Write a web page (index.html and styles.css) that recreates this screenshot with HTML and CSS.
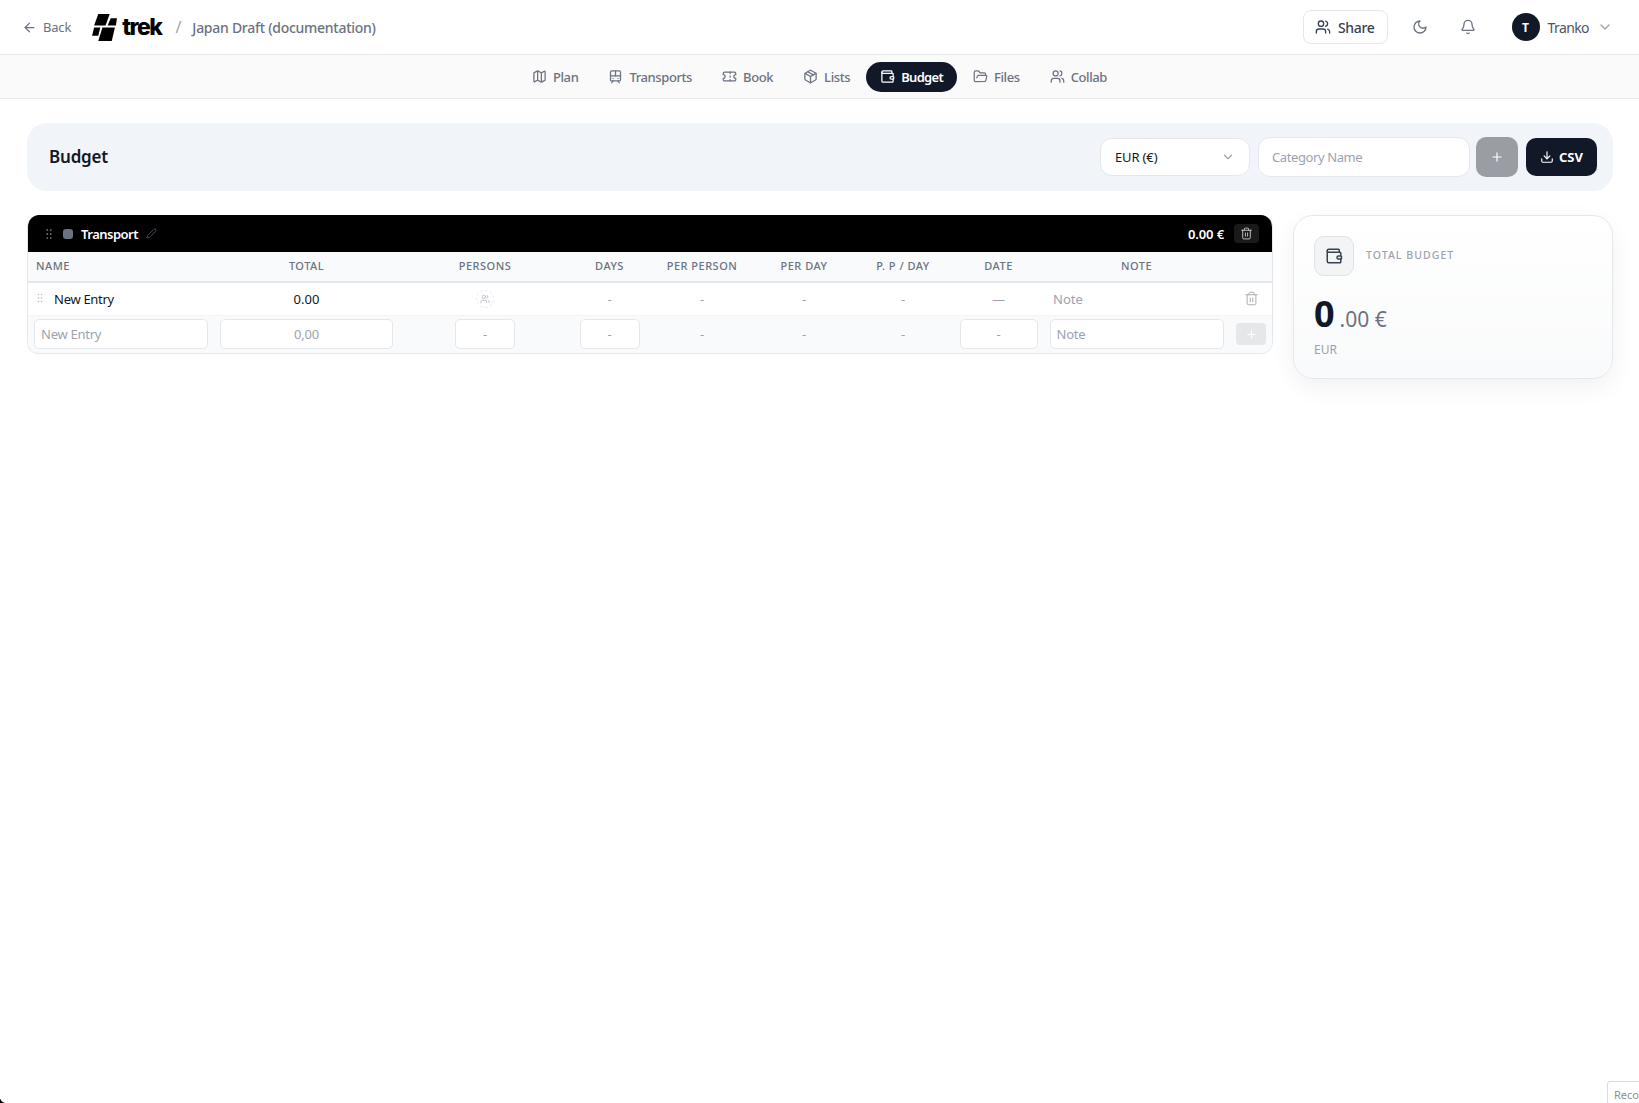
FILE: index.html
```html
<!doctype html>
<html lang="en">
  <head>
    <meta charset="UTF-8" />
    <title>Japan Draft (documentation) - Budget</title>
    <link rel="stylesheet" href="styles.css">
  </head>
  <body>
    <header class="topbar">
      <a class="back">
        <svg class="icon" viewBox="0 0 24 24"><path d="m12 19-7-7 7-7"/><path d="M19 12H5"/></svg>
        Back
      </a>
      <div class="logo">
        <svg class="logo-mark" viewBox="0 0 24 26">
          <polygon points="6,0 17,0 13,11 2,11"/>
          <polygon points="18,4 24,4 23,11 15,11"/>
          <polygon points="2,13 8,13 6,21 0,21"/>
          <polygon points="10,13 22,13 19,26 6,26"/>
        </svg>
        <span class="logo-text">trek</span>
      </div>
      <span class="slash">/</span>
      <span class="trip-title">Japan Draft (documentation)</span>
      <div class="topbar-right">
        <button class="share">
          <svg class="icon" viewBox="0 0 24 24"><path d="M16 21v-2a4 4 0 0 0-4-4H6a4 4 0 0 0-4 4v2"/><circle cx="9" cy="7" r="4"/><path d="M22 21v-2a4 4 0 0 0-3-3.87"/><path d="M16 3.13a4 4 0 0 1 0 7.75"/></svg>
          Share
        </button>
        <svg class="icon top-icon" viewBox="0 0 24 24"><path d="M12 3a6 6 0 0 0 9 9 9 9 0 1 1-9-9Z"/></svg>
        <svg class="icon top-icon" viewBox="0 0 24 24"><path d="M10.268 21a2 2 0 0 0 3.464 0"/><path d="M3.262 15.326A1 1 0 0 0 4 17h16a1 1 0 0 0 .74-1.673C19.41 13.956 18 12.499 18 8A6 6 0 0 0 6 8c0 4.499-1.411 5.956-2.738 7.326"/></svg>
        <div class="user">
          <span class="avatar">T</span>
          <span class="user-name">Tranko</span>
          <svg class="icon chevron" viewBox="0 0 24 24"><path d="m6 9 6 6 6-6"/></svg>
        </div>
      </div>
    </header>

    <nav class="tabs">
      <a class="tab"><svg class="icon" viewBox="0 0 24 24"><path d="M14.106 5.553a2 2 0 0 0 1.788 0l3.659-1.83A1 1 0 0 1 21 4.619v12.764a1 1 0 0 1-.553.894l-4.553 2.277a2 2 0 0 1-1.788 0l-4.212-2.106a2 2 0 0 0-1.788 0l-3.659 1.83A1 1 0 0 1 3 19.381V6.618a1 1 0 0 1 .553-.894l4.553-2.277a2 2 0 0 1 1.788 0z"/><path d="M15 5.764v15"/><path d="M9 3.236v15"/></svg>Plan</a>
      <a class="tab"><svg class="icon" viewBox="0 0 24 24"><rect x="4" y="3" width="16" height="16" rx="2"/><path d="M4 11h16"/><path d="M12 3v8"/><path d="m8 19-2 3"/><path d="m18 22-2-3"/><path d="M8 15h.01"/><path d="M16 15h.01"/></svg>Transports</a>
      <a class="tab"><svg class="icon" viewBox="0 0 24 24"><path d="M2 9a3 3 0 0 1 0 6v2a2 2 0 0 0 2 2h16a2 2 0 0 0 2-2v-2a3 3 0 0 1 0-6V7a2 2 0 0 0-2-2H4a2 2 0 0 0-2 2Z"/><path d="M13 5v2"/><path d="M13 17v2"/><path d="M13 11v2"/></svg>Book</a>
      <a class="tab"><svg class="icon" viewBox="0 0 24 24"><path d="M11 21.73a2 2 0 0 0 2 0l7-4A2 2 0 0 0 21 16V8a2 2 0 0 0-1-1.73l-7-4a2 2 0 0 0-2 0l-7 4A2 2 0 0 0 3 8v8a2 2 0 0 0 1 1.73z"/><path d="M12 22V12"/><path d="m3.3 7 8.7 5 8.7-5"/><path d="m7.5 4.27 9 5.15"/></svg>Lists</a>
      <a class="tab active"><svg class="icon" viewBox="0 0 24 24"><path d="M19 7V4a1 1 0 0 0-1-1H5a2 2 0 0 0 0 4h15a1 1 0 0 1 1 1v4h-3a2 2 0 0 0 0 4h3a1 1 0 0 0 1-1v-2a1 1 0 0 0-1-1"/><path d="M3 5v14a2 2 0 0 0 2 2h15a1 1 0 0 0 1-1v-4"/></svg>Budget</a>
      <a class="tab"><svg class="icon" viewBox="0 0 24 24"><path d="m6 14 1.5-2.9A2 2 0 0 1 9.24 10H20a2 2 0 0 1 1.94 2.5l-1.54 6a2 2 0 0 1-1.95 1.5H4a2 2 0 0 1-2-2V5a2 2 0 0 1 2-2h3.9a2 2 0 0 1 1.69.9l.81 1.2a2 2 0 0 0 1.67.9H18a2 2 0 0 1 2 2v2"/></svg>Files</a>
      <a class="tab"><svg class="icon" viewBox="0 0 24 24"><path d="M16 21v-2a4 4 0 0 0-4-4H6a4 4 0 0 0-4 4v2"/><circle cx="9" cy="7" r="4"/><path d="M22 21v-2a4 4 0 0 0-3-3.87"/><path d="M16 3.13a4 4 0 0 1 0 7.75"/></svg>Collab</a>
    </nav>

    <main class="page">
      <section class="budget-bar">
        <h1>Budget</h1>
        <div class="budget-actions">
          <div class="currency">
            <span>EUR (€)</span>
            <svg class="icon" viewBox="0 0 24 24"><path d="m6 9 6 6 6-6"/></svg>
          </div>
          <input class="category-input" type="text" placeholder="Category Name" />
          <button class="add-category">
            <svg class="icon" viewBox="0 0 24 24"><path d="M5 12h14"/><path d="M12 5v14"/></svg>
          </button>
          <button class="csv">
            <svg class="icon" viewBox="0 0 24 24"><path d="M12 15V3"/><path d="M21 15v4a2 2 0 0 1-2 2H5a2 2 0 0 1-2-2v-4"/><path d="m7 10 5 5 5-5"/></svg>
            CSV
          </button>
        </div>
      </section>

      <div class="columns">
        <section class="category">
          <div class="category-head">
            <svg class="grip" viewBox="0 0 24 24"><circle cx="9" cy="5" r="1.6"/><circle cx="15" cy="5" r="1.6"/><circle cx="9" cy="12" r="1.6"/><circle cx="15" cy="12" r="1.6"/><circle cx="9" cy="19" r="1.6"/><circle cx="15" cy="19" r="1.6"/></svg>
            <span class="color-dot"></span>
            <span class="category-name">Transport</span>
            <svg class="icon pencil" viewBox="0 0 24 24"><path d="M21.174 6.812a1 1 0 0 0-3.986-3.987L3.842 16.174a2 2 0 0 0-.5.83l-1.321 4.352a.5.5 0 0 0 .623.622l4.353-1.32a2 2 0 0 0 .83-.497z"/></svg>
            <span class="category-total">0.00 €</span>
            <span class="category-delete">
              <svg class="icon" viewBox="0 0 24 24"><path d="M3 6h18"/><path d="M19 6v14a2 2 0 0 1-2 2H7a2 2 0 0 1-2-2V6"/><path d="M8 6V4a2 2 0 0 1 2-2h4a2 2 0 0 1 2 2v2"/><path d="M10 11v6"/><path d="M14 11v6"/></svg>
            </span>
          </div>
          <table class="entries">
            <colgroup>
              <col class="c-name"><col class="c-total"><col class="c-persons"><col class="c-days">
              <col class="c-pp"><col class="c-pd"><col class="c-ppd"><col class="c-date">
              <col class="c-note"><col class="c-act">
            </colgroup>
            <thead>
              <tr>
                <th class="left">Name</th><th>Total</th><th>Persons</th><th>Days</th>
                <th>Per Person</th><th>Per Day</th><th>P. P / Day</th><th>Date</th><th>Note</th><th></th>
              </tr>
            </thead>
            <tbody>
              <tr class="entry">
                <td class="entry-name">
                  <svg class="grip" viewBox="0 0 24 24"><circle cx="9" cy="5" r="1.6"/><circle cx="15" cy="5" r="1.6"/><circle cx="9" cy="12" r="1.6"/><circle cx="15" cy="12" r="1.6"/><circle cx="9" cy="19" r="1.6"/><circle cx="15" cy="19" r="1.6"/></svg>
                  New Entry
                </td>
                <td class="amount">0.00</td>
                <td><span class="persons-chip"><svg class="icon" viewBox="0 0 24 24"><path d="M16 21v-2a4 4 0 0 0-4-4H6a4 4 0 0 0-4 4v2"/><circle cx="9" cy="7" r="4"/><path d="M22 21v-2a4 4 0 0 0-3-3.87"/><path d="M16 3.13a4 4 0 0 1 0 7.75"/></svg></span></td>
                <td class="muted">-</td>
                <td class="muted">-</td>
                <td class="muted">-</td>
                <td class="muted">-</td>
                <td class="muted">—</td>
                <td class="note-cell">Note</td>
                <td><svg class="icon row-delete" viewBox="0 0 24 24"><path d="M3 6h18"/><path d="M19 6v14a2 2 0 0 1-2 2H7a2 2 0 0 1-2-2V6"/><path d="M8 6V4a2 2 0 0 1 2-2h4a2 2 0 0 1 2 2v2"/><path d="M10 11v6"/><path d="M14 11v6"/></svg></td>
              </tr>
              <tr class="new-entry">
                <td><input class="cell-input left" type="text" placeholder="New Entry" /></td>
                <td><input class="cell-input" type="text" placeholder="0,00" /></td>
                <td><input class="cell-input small" type="text" placeholder="-" /></td>
                <td><input class="cell-input small" type="text" placeholder="-" /></td>
                <td class="muted">-</td>
                <td class="muted">-</td>
                <td class="muted">-</td>
                <td><input class="cell-input date" type="text" placeholder="-" /></td>
                <td><input class="cell-input left" type="text" placeholder="Note" /></td>
                <td><button class="add-entry"><svg class="icon" viewBox="0 0 24 24"><path d="M5 12h14"/><path d="M12 5v14"/></svg></button></td>
              </tr>
            </tbody>
          </table>
        </section>

        <aside class="total-card">
          <div class="total-head">
            <span class="wallet-box">
              <svg class="icon" viewBox="0 0 24 24"><path d="M19 7V4a1 1 0 0 0-1-1H5a2 2 0 0 0 0 4h15a1 1 0 0 1 1 1v4h-3a2 2 0 0 0 0 4h3a1 1 0 0 0 1-1v-2a1 1 0 0 0-1-1"/><path d="M3 5v14a2 2 0 0 0 2 2h15a1 1 0 0 0 1-1v-4"/></svg>
            </span>
            <span class="total-label">Total Budget</span>
          </div>
          <div class="total-value"><span class="whole">0</span><span class="cents">.00 €</span></div>
          <div class="total-currency">EUR</div>
        </aside>
      </div>
    </main>

    <div class="recaptcha">Reco</div>
    <div class="window-corner"></div>
  </body>
</html>
```

FILE: styles.css
```css
* {
  box-sizing: border-box;
}
body {
  margin: 0;
  height: 1103px;
  overflow: hidden;
  font-family: "Noto Sans", "Open Sans", sans-serif;
  font-size: 13px;
  color: #111827;
  background: #fff;
}
button {
  font-family: inherit;
  border: none;
  cursor: pointer;
}
input {
  font-family: inherit;
  outline: none;
}
input::placeholder {
  color: #9ca3af;
  opacity: 1;
}
.icon {
  width: 16px;
  height: 16px;
  flex: none;
  fill: none;
  stroke: currentColor;
  stroke-width: 2;
  stroke-linecap: round;
  stroke-linejoin: round;
}

/* top bar */
.topbar {
  height: 55px;
  display: flex;
  align-items: center;
  padding: 0 26px 0 22px;
  border-bottom: 1px solid #e5e7eb;
  box-shadow: 0 1px 3px rgba(0, 0, 0, 0.03);
  color: #6b7280;
}
.back {
  display: flex;
  align-items: center;
  gap: 6px;
  font-size: 13px;
  letter-spacing: -0.2px;
  color: #6b7280;
}
.back .icon {
  width: 15px;
  height: 15px;
}
.logo {
  display: flex;
  align-items: center;
  gap: 5px;
  margin-left: 21px;
}
.logo-mark {
  width: 25px;
  height: 27px;
  fill: #000;
}
.logo-text {
  font-family: Inter, sans-serif;
  font-size: 23px;
  font-weight: 800;
  letter-spacing: -1.5px;
  color: #000;
  line-height: 1;
}
.slash {
  margin-left: 14px;
  font-size: 16px;
  color: #9ca3af;
}
.trip-title {
  margin-left: 11px;
  font-size: 14px;
  font-weight: 500;
  letter-spacing: -0.27px;
  color: #6b7280;
}
.topbar-right {
  margin-left: auto;
  display: flex;
  align-items: center;
}
.share {
  display: flex;
  align-items: center;
  gap: 7px;
  height: 34px;
  padding: 0 12px 0 11px;
  font-size: 14px;
  font-weight: 500;
  letter-spacing: -0.3px;
  color: #374151;
  background: #fff;
  border: 1px solid #e5e7eb;
  border-radius: 8px;
}
.top-icon {
  color: #6b7280;
  margin-left: 24px;
}
.top-icon + .top-icon {
  margin-left: 32px;
}
.user {
  display: flex;
  align-items: center;
  margin-left: 36px;
}
.avatar {
  width: 28px;
  height: 28px;
  border-radius: 50%;
  background: #111827;
  color: #fff;
  font-size: 12px;
  font-weight: 700;
  display: flex;
  align-items: center;
  justify-content: center;
}
.user-name {
  margin-left: 8px;
  font-size: 14px;
  letter-spacing: -0.6px;
  color: #4b5563;
}
.chevron {
  margin-left: 8px;
  color: #9ca3af;
}

/* tabs */
.tabs {
  height: 44px;
  display: flex;
  align-items: center;
  justify-content: center;
  gap: 2px;
  background: #fafafa;
  border-bottom: 1px solid #e9eaec;
}
.tab {
  display: flex;
  align-items: center;
  gap: 6px;
  height: 30px;
  padding: 0 14px;
  font-size: 13px;
  font-weight: 500;
  letter-spacing: -0.4px;
  color: #6b7280;
  border-radius: 15px;
}
.tab .icon {
  width: 15px;
  height: 15px;
}
.tab.active {
  background: #111827;
  color: #fff;
  font-weight: 600;
  letter-spacing: -0.7px;
}

/* budget header */
.page {
  padding: 24px 26px 0 27px;
}
.budget-bar {
  height: 68px;
  display: flex;
  align-items: center;
  justify-content: space-between;
  padding: 0 16px 0 22px;
  background: #f1f5f9;
  border-radius: 20px;
}
.budget-bar h1 {
  margin: 0 0 2px;
  font-size: 17px;
  font-weight: 600;
  letter-spacing: -0.2px;
  color: #111827;
}
.budget-actions {
  display: flex;
  align-items: center;
}
.currency {
  width: 150px;
  height: 38px;
  display: flex;
  align-items: center;
  justify-content: space-between;
  padding: 0 14px 0 14px;
  background: #fff;
  border: 1px solid #e5e7eb;
  border-radius: 12px;
  font-size: 13px;
  letter-spacing: -0.15px;
}
.currency .icon {
  width: 14px;
  height: 14px;
  color: #9ca3af;
}
.category-input {
  width: 212px;
  height: 40px;
  margin-left: 8px;
  padding: 0 13px;
  font-size: 13px;
  letter-spacing: -0.4px;
  background: #fff;
  border: 1px solid #e5e7eb;
  border-radius: 12px;
}
.add-category {
  width: 42px;
  height: 40px;
  margin-left: 6px;
  display: flex;
  align-items: center;
  justify-content: center;
  background: #9a9da3;
  color: #fff;
  border-radius: 10px;
}
.add-category .icon {
  width: 14px;
  height: 14px;
}
.csv {
  width: 71px;
  height: 38px;
  margin-left: 8px;
  display: flex;
  align-items: center;
  justify-content: center;
  gap: 5px;
  background: #111827;
  color: #fff;
  font-size: 13px;
  font-weight: 700;
  border-radius: 10px;
}
.csv .icon {
  width: 14px;
  height: 14px;
}

/* category table */
.columns {
  display: flex;
  align-items: flex-start;
  gap: 20px;
  margin-top: 24px;
}
.category {
  width: 1246px;
  border: 1px solid #e5e7eb;
  border-top: none;
  border-radius: 12px;
  overflow: hidden;
}
.category-head {
  height: 37px;
  margin: 0 -1px;
  display: flex;
  align-items: center;
  padding: 0 14px 0 15px;
  background: #000;
  color: #fff;
}
.grip {
  width: 14px;
  height: 14px;
  fill: #6b7280;
  flex: none;
}
.color-dot {
  width: 10px;
  height: 10px;
  margin-left: 7px;
  border-radius: 3px;
  background: #6b7280;
}
.category-name {
  margin-left: 8px;
  font-size: 13px;
  font-weight: 600;
  letter-spacing: -0.5px;
}
.pencil {
  width: 11px;
  height: 11px;
  margin-left: 8px;
  color: #6b7280;
  stroke-width: 1.5;
}
.category-total {
  margin-left: auto;
  font-size: 13px;
  font-weight: 600;
  letter-spacing: -0.1px;
}
.category-delete {
  width: 25px;
  height: 19px;
  margin-left: 10px;
  display: flex;
  align-items: center;
  justify-content: center;
  border-radius: 4px;
  background: #1a1a1a;
  color: #d1d5db;
}
.category-delete .icon {
  width: 13px;
  height: 13px;
  stroke-width: 1.6;
}
.entries {
  width: 100%;
  table-layout: fixed;
  border-collapse: collapse;
}
.c-name { width: 186px; }
.c-total { width: 185px; }
.c-persons { width: 172px; }
.c-days { width: 77px; }
.c-pp { width: 108px; }
.c-pd { width: 96px; }
.c-ppd { width: 102px; }
.c-date { width: 89px; }
.c-note { width: 187px; }
.c-act { width: 42px; }
.entries th {
  height: 30px;
  padding: 0 0 3px;
  font-size: 11px;
  font-weight: 500;
  letter-spacing: 0.5px;
  text-transform: uppercase;
  color: #6b7280;
  background: #f9fafb;
  border-bottom: 2px solid #e5e7eb;
  text-align: center;
}
.entries th.left {
  text-align: left;
  padding-left: 8px;
}
.entries td {
  padding: 0;
  text-align: center;
  vertical-align: middle;
}
.entry td {
  height: 33px;
  border-bottom: 1px solid #f3f4f6;
}
.new-entry td {
  height: 38px;
  background: #f9fafb;
}
.entries td.entry-name {
  text-align: left;
  padding-left: 6px;
  font-size: 13px;
  letter-spacing: -0.3px;
  color: #111827;
}
.entry-name .grip {
  width: 12px;
  height: 12px;
  fill: #b8bcc4;
  margin-right: 5px;
  vertical-align: 0;
}
.amount {
  font-size: 13px;
  color: #111827;
}
.muted {
  color: #9ca3af;
  font-size: 13px;
}
.entries td.note-cell {
  text-align: left;
  padding-left: 10px;
  color: #9ca3af;
  font-size: 13px;
}
.persons-chip {
  width: 18px;
  height: 18px;
  margin-bottom: 1px;
  display: inline-flex;
  align-items: center;
  justify-content: center;
  border: 1px dashed #e5e7eb;
  border-radius: 50%;
  color: #b3b7bf;
  vertical-align: middle;
}
.persons-chip .icon {
  width: 10px;
  height: 10px;
}
.row-delete {
  width: 15px;
  height: 15px;
  margin-bottom: 3px;
  color: #a9adb5;
  stroke-width: 1.6;
  vertical-align: middle;
}
.cell-input {
  width: 173px;
  height: 30px;
  padding: 0 6px;
  font-size: 13px;
  letter-spacing: -0.25px;
  text-align: center;
  background: #fff;
  border: 1px solid #e5e7eb;
  border-radius: 5px;
  display: block;
  margin: 0 auto;
}
.cell-input.left {
  width: 174px;
  text-align: left;
}
.cell-input.small {
  width: 60px;
}
.cell-input.date {
  width: 78px;
}
.add-entry {
  width: 30px;
  height: 22px;
  display: inline-flex;
  align-items: center;
  justify-content: center;
  padding: 0;
  background: #e5e7eb;
  color: #fff;
  border-radius: 4px;
  vertical-align: middle;
}
.add-entry .icon {
  width: 13px;
  height: 13px;
}

/* total card */
.total-card {
  width: 320px;
  height: 164px;
  padding: 20px;
  background: linear-gradient(180deg, #fff 0%, #f9fafb 100%);
  border: 1px solid #e5e7eb;
  border-radius: 20px;
  box-shadow: 0 8px 24px rgba(0, 0, 0, 0.06);
}
.total-head {
  display: flex;
  align-items: center;
  gap: 12px;
}
.wallet-box {
  width: 40px;
  height: 40px;
  display: flex;
  align-items: center;
  justify-content: center;
  background: #f3f4f6;
  border: 1px solid #e0e2e6;
  border-radius: 10px;
  color: #374151;
}
.wallet-box .icon {
  width: 18px;
  height: 18px;
}
.total-label {
  margin-bottom: 2px;
  font-size: 10.5px;
  font-weight: 500;
  letter-spacing: 1.05px;
  text-transform: uppercase;
  color: #9ca3af;
}
.total-value {
  display: flex;
  align-items: baseline;
  margin-top: 13px;
  line-height: 50px;
}
.whole {
  font-size: 36px;
  font-weight: 700;
  color: #111827;
}
.cents {
  margin-left: 5px;
  font-size: 21px;
  color: #6b7280;
}
.total-currency {
  margin-top: -3px;
  font-size: 12px;
  color: #9ca3af;
}

/* things lying over the page */
.recaptcha {
  position: fixed;
  right: -8px;
  bottom: -8px;
  width: 40px;
  height: 30px;
  padding: 5px 0 0 6px;
  overflow: hidden;
  font-size: 11px;
  line-height: 16px;
  color: #8a8f98;
  background: #fff;
  border: 1px solid #d9dbde;
  border-radius: 3px;
}
.window-corner {
  position: fixed;
  left: 0;
  bottom: 0;
  width: 6px;
  height: 4px;
  background: radial-gradient(circle at 6px -2px, transparent 5.5px, #000 6.5px);
}
```
